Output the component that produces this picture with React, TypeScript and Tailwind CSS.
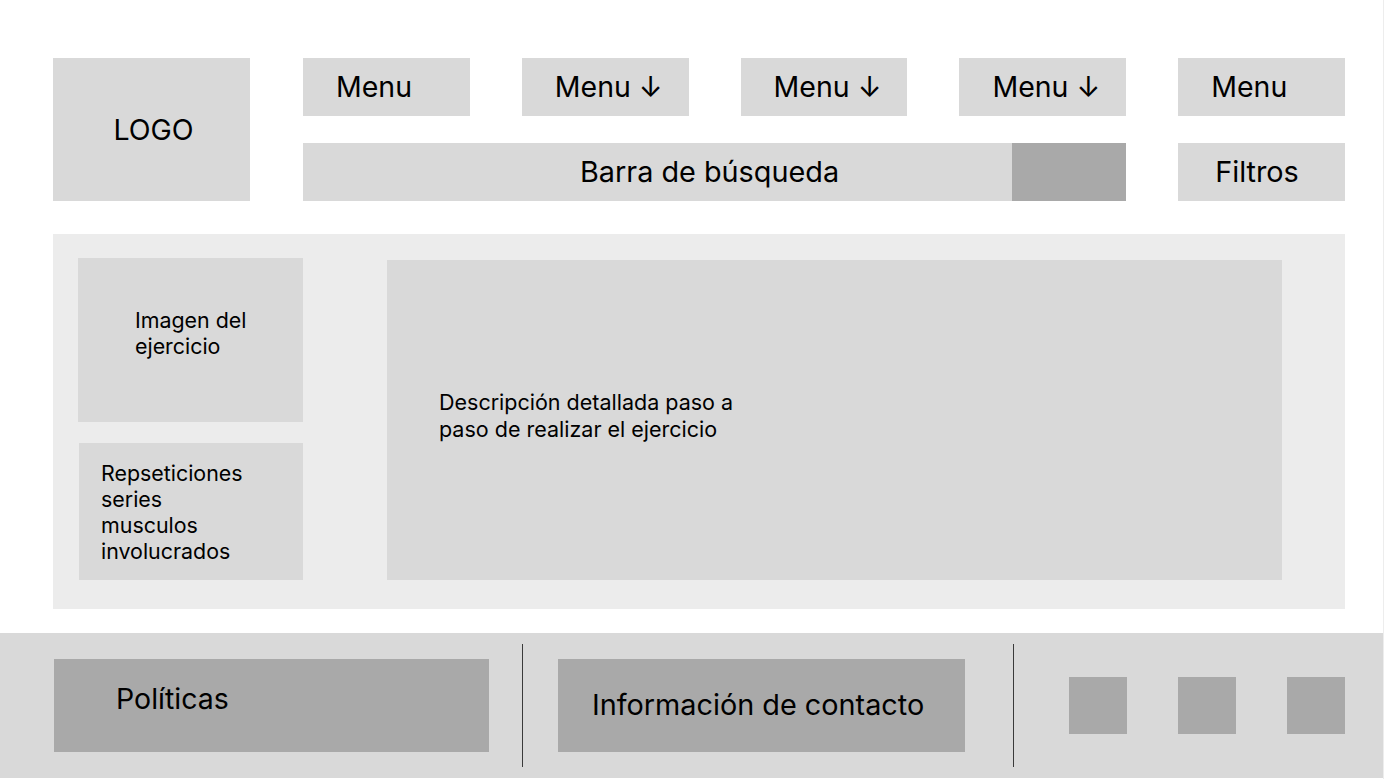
export default function App() {
  const menus = ["Menu", "Menu ↓", "Menu ↓", "Menu ↓", "Menu"];
  return (
    <div
      className="w-[1385px] h-[779px] bg-white text-black flex flex-col"
      style={{ fontFamily: "Inter, 'Noto Sans', sans-serif" }}
    >
      <div className="w-[1384px] h-[779px] border-r border-[#ededed] flex flex-col">
        {/* Header */}
        <div className="flex pt-[58px] pl-[53px]">
          <div className="w-[197px] h-[143px] bg-[#d9d9d9] flex items-center justify-center text-[28.5px] leading-[34px] pl-[4px]">
            LOGO
          </div>
          <div className="ml-[53px] w-[1042px] grid grid-cols-5 gap-x-[52px] gap-y-[27px] grid-rows-[58px_58px]">
            {menus.map((m, i) => (
              <div
                key={i}
                className="bg-[#d9d9d9] flex items-center pl-[33px] text-[28.5px] leading-[34px]"
              >
                {m}
              </div>
            ))}
            <div className="col-span-4 flex bg-[#d9d9d9]">
              <div className="flex-1 flex items-center pl-[277px] text-[28.8px] leading-[34px]">
                Barra de búsqueda
              </div>
              <div className="w-[114px] bg-[#a9a9a9]" />
            </div>
            <div className="bg-[#d9d9d9] flex items-center pl-[37px] text-[28.8px] leading-[34px]">
              Filtros
            </div>
          </div>
        </div>

        {/* Main */}
        <div className="mt-[33px] ml-[53px] w-[1292px] h-[375px] bg-[#ececec] flex pl-[25px] pt-[24px]">
          <div className="w-[225px] flex flex-col gap-[21px]">
            <div className="h-[164px] bg-[#d9d9d9] pl-[57px] pt-[49px] text-[21.4px] leading-[26px]">
              Imagen del
              <br />
              ejercicio
            </div>
            <div className="h-[137px] ml-[1px] bg-[#d9d9d9] pl-[22px] pt-[17px] text-[21.4px] leading-[26px]">
              Repseticiones
              <br />
              series
              <br />
              musculos
              <br />
              involucrados
            </div>
          </div>
          <div className="ml-[84px] mt-[2px] w-[895px] h-[320px] bg-[#d9d9d9] pl-[52px] pt-[129px] text-[21.5px] leading-[27px]">
            Descripción detallada paso a
            <br />
            paso de realizar el ejercicio
          </div>
        </div>

        {/* Footer */}
        <div className="mt-[24px] h-[145px] bg-[#d9d9d9] flex items-start pl-[54px]">
          <div className="mt-[26px] w-[435px] h-[93px] bg-[#a9a9a9] pl-[62px] pt-[23px] text-[28.5px] leading-[34px]">
            Políticas
          </div>
          <div className="ml-[33px] mt-[11px] w-px h-[123px] bg-[#3a3a3a]" />
          <div className="ml-[35px] mt-[26px] w-[407px] h-[93px] bg-[#a9a9a9] flex items-center pl-[34px] pb-[2px] text-[28.8px] leading-[34px]">
            Información de contacto
          </div>
          <div className="ml-[48px] mt-[11px] w-px h-[123px] bg-[#3a3a3a]" />
          <div className="ml-[55px] mt-[44px] flex gap-[51px]">
            <div className="w-[58px] h-[57px] bg-[#a9a9a9]" />
            <div className="w-[58px] h-[57px] bg-[#a9a9a9]" />
            <div className="w-[58px] h-[57px] bg-[#a9a9a9]" />
          </div>
        </div>
      </div>
    </div>
  );
}
